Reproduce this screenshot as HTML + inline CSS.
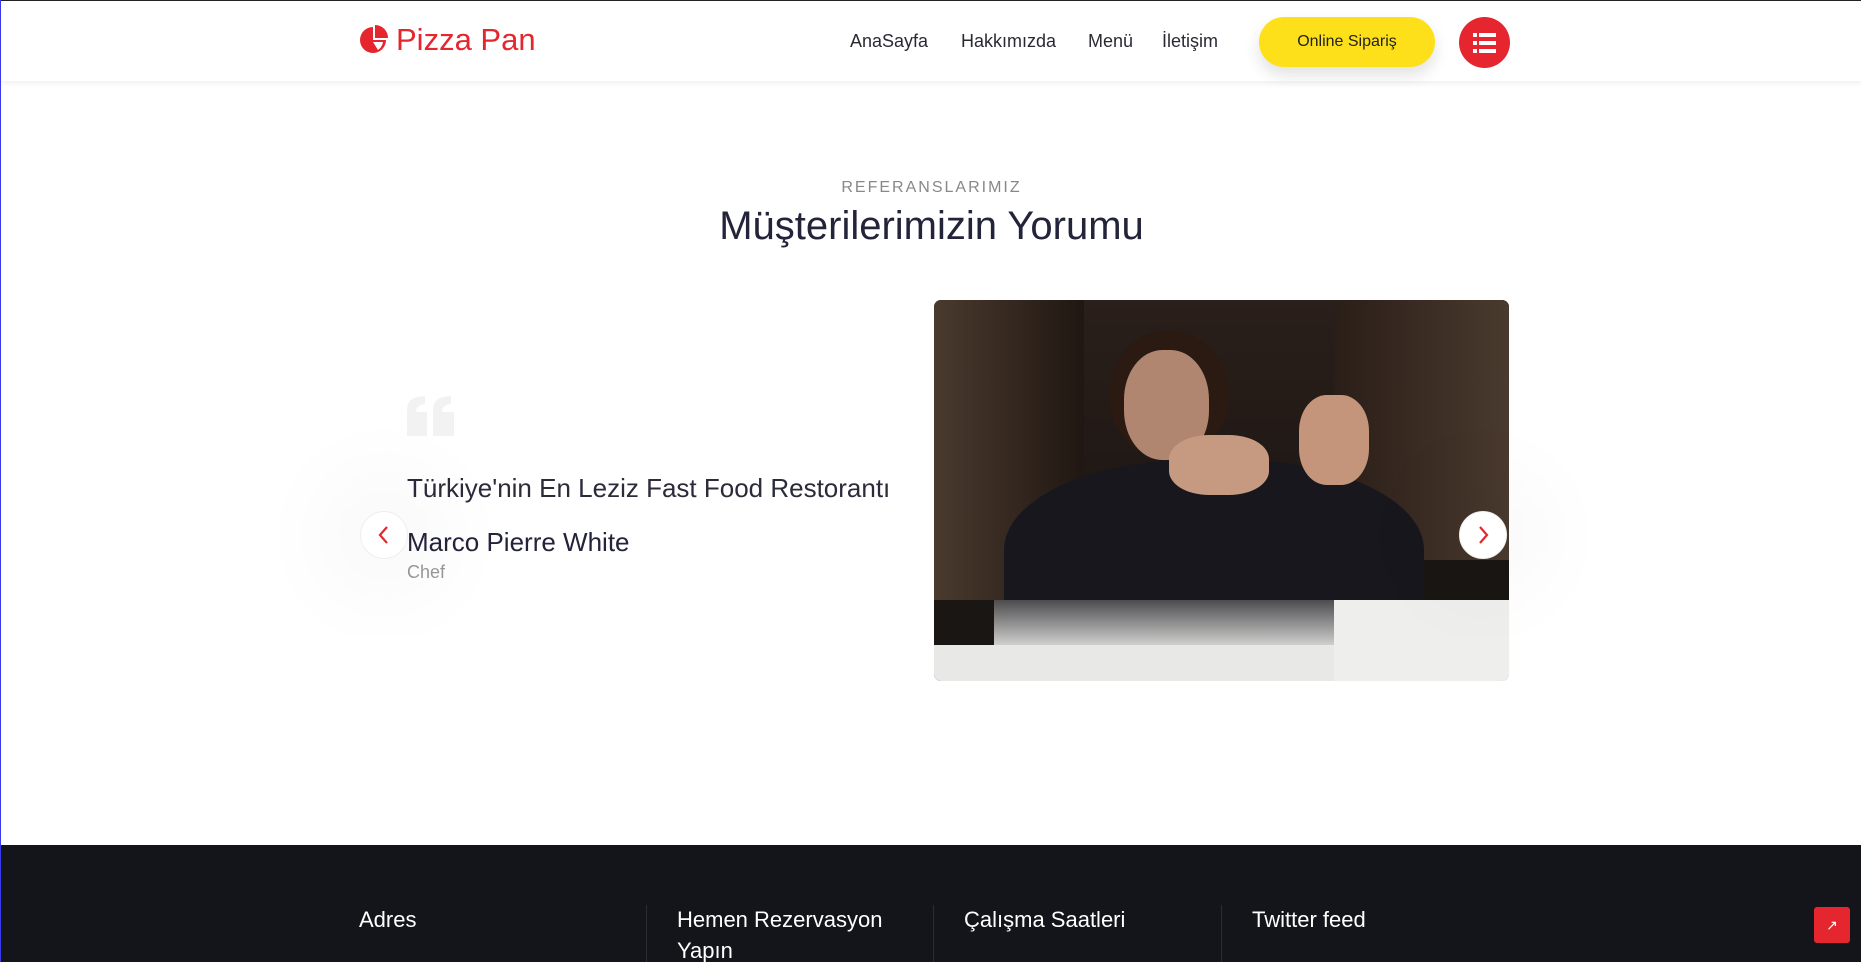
<!DOCTYPE html>
<html><head><meta charset="utf-8"><style>
*{margin:0;padding:0;box-sizing:border-box}
body{width:1861px;height:962px;overflow:hidden;background:#fff;font-family:"Liberation Sans",sans-serif;position:relative;border-left:1px solid #3a3af0}
.hdr{position:absolute;left:0;top:0;width:1861px;height:81px;background:#fff;box-shadow:0 2px 6px rgba(0,0,0,.07);border-top:1px solid #222}
.logo{position:absolute;left:357px;top:21px;color:#e5262e;font-size:31px;display:flex;align-items:center;gap:8px}
.nav{position:absolute;top:30px;font-size:18px;color:#2a2a35}
.btn{position:absolute;left:1258px;top:16px;width:176px;height:50px;border-radius:25px;background:#fde01a;font-size:16px;color:#222;text-align:center;line-height:50px;box-shadow:0 8px 16px rgba(0,0,0,.12)}
.menu{position:absolute;left:1458px;top:16px;width:51px;height:51px;border-radius:50%;background:#e5262e}
.abs{position:absolute}
.arrow{position:absolute;width:48px;height:48px;border-radius:50%;background:#fff;border:1px solid #eee;box-shadow:0 0 80px 50px rgba(0,0,0,.025)}
.foot{position:absolute;left:0;top:845px;width:1861px;height:117px;background:#14151b}
.fh{position:absolute;color:#fff;font-size:22px;line-height:31px}
.div{position:absolute;top:905px;width:1px;height:57px;background:#2a2b33}
</style></head><body>
<div class="hdr">
 <div class="logo"><svg width="30" height="30" viewBox="0 0 30 30"><path d="M15 2 A13 13 0 1 0 28 15 L15 15 Z" fill="#e5262e"/><path d="M17 0 A13 13 0 0 1 30 13 L17 13 Z" fill="#e5262e"/><path d="M15 17 L25 17 A12 12 0 0 1 20 25 Z" fill="#fff"/></svg><span>Pizza Pan</span></div>
 <div class="nav" style="left:849px">AnaSayfa</div>
 <div class="nav" style="left:960px">Hakkımızda</div>
 <div class="nav" style="left:1087px">Menü</div>
 <div class="nav" style="left:1161px">İletişim</div>
 <div class="btn">Online Sipariş</div>
 <div class="menu"><svg width="51" height="51" viewBox="0 0 51 51"><g fill="#fff"><rect x="14" y="16" width="4" height="4"/><rect x="20" y="16" width="17" height="4"/><rect x="14" y="24" width="4" height="4"/><rect x="20" y="24" width="17" height="4"/><rect x="14" y="32" width="4" height="4"/><rect x="20" y="32" width="17" height="4"/></g></svg></div>
</div>
<div class="abs" style="left:0;width:1861px;top:179px;text-align:center;font-size:16px;letter-spacing:2px;color:#888">REFERANSLARIMIZ</div>
<div class="abs" style="left:0;width:1861px;top:204px;text-align:center;font-size:40px;color:#23233a">Müşterilerimizin Yorumu</div>
<svg class="abs" style="left:406px;top:396px" width="47" height="40" viewBox="0 0 47 40"><g fill="#f2f2f2"><path d="M0 14 Q0 0 18 0 L18 8 Q9 9 9 16 L20 16 L20 40 L0 40 Z"/><path d="M26 14 Q26 0 44 0 L44 8 Q35 9 35 16 L47 16 L47 40 L26 40 Z"/></g></svg>
<div class="abs" style="left:406px;top:473px;font-size:26px;color:#2b2b3a">Türkiye'nin En Leziz Fast Food Restorantı</div>
<div class="abs" style="left:406px;top:527px;font-size:26px;color:#23233a">Marco Pierre White</div>
<div class="abs" style="left:406px;top:562px;font-size:18px;color:#999">Chef</div>
<div class="abs" style="left:933px;top:300px;width:575px;height:381px;border-radius:7px;overflow:hidden;background:linear-gradient(180deg,#2a1f1a 0%,#1f1815 50%,#1a1614 70%)">
 <div class="abs" style="left:0;top:0;width:150px;height:300px;background:linear-gradient(90deg,#4a3a2e,#201712)"></div>
 <div class="abs" style="left:400px;top:0;width:175px;height:260px;background:linear-gradient(90deg,#2a1e18,#4a3a2e)"></div>
 <div class="abs" style="left:70px;top:160px;width:420px;height:200px;border-radius:45% 45% 0 0;background:#17171d"></div>
 <div class="abs" style="left:175px;top:30px;width:120px;height:130px;border-radius:50%;background:#2a1a12"></div>
 <div class="abs" style="left:190px;top:50px;width:85px;height:110px;border-radius:45%;background:#b08670"></div>
 <div class="abs" style="left:235px;top:135px;width:100px;height:60px;border-radius:40%;background:#c69a80"></div>
 <div class="abs" style="left:365px;top:95px;width:70px;height:90px;border-radius:40%;background:#c4957a"></div>
 <div class="abs" style="left:0;top:345px;width:575px;height:36px;background:#e8e8e6"></div>
 <div class="abs" style="left:400px;top:300px;width:175px;height:81px;background:#eeeeec"></div>
 <div class="abs" style="left:60px;top:300px;width:340px;height:45px;background:linear-gradient(180deg,rgba(200,200,200,.3),#cfcfcd)"></div>
</div>
<div class="arrow" style="left:359px;top:511px"><svg width="46" height="46" viewBox="0 0 46 46"><path d="M26 15 L19 23 L26 31" stroke="#e5262e" stroke-width="2.2" fill="none"/></svg></div>
<div class="arrow" style="left:1458px;top:511px"><svg width="46" height="46" viewBox="0 0 46 46"><path d="M20 15 L27 23 L20 31" stroke="#e5262e" stroke-width="2.2" fill="none"/></svg></div>
<div class="foot"></div>
<div class="fh" style="left:358px;top:904px">Adres</div>
<div class="div" style="left:645px"></div>
<div class="fh" style="left:676px;top:904px;width:220px">Hemen Rezervasyon Yapın</div>
<div class="div" style="left:932px"></div>
<div class="fh" style="left:963px;top:904px">Çalışma Saatleri</div>
<div class="div" style="left:1220px"></div>
<div class="fh" style="left:1251px;top:904px">Twitter feed</div>
<div class="abs" style="left:1813px;top:907px;width:36px;height:36px;border-radius:3px;background:#e5262e;color:#fff;font-size:14px;text-align:center;line-height:36px">↗</div>
</body></html>
